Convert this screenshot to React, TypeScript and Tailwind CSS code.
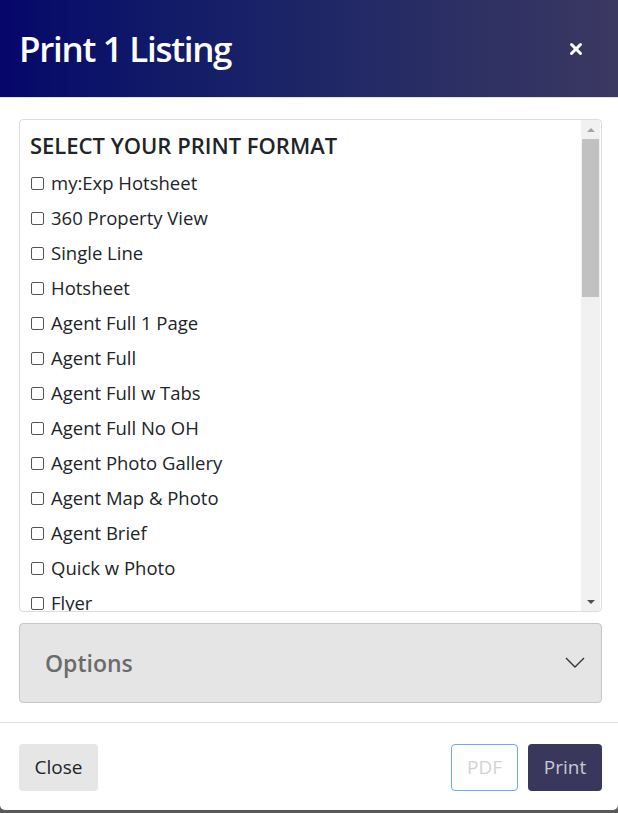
import { X } from 'lucide-react';

const formats = [
  'my:Exp Hotsheet',
  '360 Property View',
  'Single Line',
  'Hotsheet',
  'Agent Full 1 Page',
  'Agent Full',
  'Agent Full w Tabs',
  'Agent Full No OH',
  'Agent Photo Gallery',
  'Agent Map & Photo',
  'Agent Brief',
  'Quick w Photo',
  'Flyer',
];

function Checkbox() {
  return <span className="inline-block w-[13px] h-[13px] shrink-0 rounded-[2px] border border-[#555] bg-white" />;
}

export default function App() {
  return (
    <div className="h-[813px] w-[618px] bg-[#5a5a5a]" style={{ fontFamily: '"Open Sans", "Noto Sans", sans-serif' }}>
      <div className="flex h-[810px] flex-col rounded-b-[5px] bg-white">
        {/* header */}
        <div className="flex h-[98px] items-center justify-between border-b border-[#dee2e6] bg-gradient-to-r from-[#06056a] to-[#3b3861] pl-[19px] pr-[33px]">
          <h1 className="text-[35px] font-semibold leading-none tracking-[-1.3px] text-white">Print 1 Listing</h1>
          <X className="h-[18px] w-[18px] text-white" strokeWidth={4} />
        </div>

        {/* body */}
        <div className="flex flex-col gap-[11px] pl-[19px] pr-[16px] pt-[21px]">
          <div className="flex h-[493px] overflow-hidden rounded-[4px] border border-[#dcdcdc]">
            <div className="flex-1 overflow-hidden pl-[10px] pt-[10px]">
              <div className="mb-[6px] text-[22px] font-semibold leading-[30px] text-[#212529]">SELECT YOUR PRINT FORMAT</div>
              {formats.map((f) => (
                <div key={f} className="flex h-[35px] items-center gap-[7px] pl-[1px] text-[18.5px] text-[#212529]">
                  <Checkbox />
                  <span className="leading-none">{f}</span>
                </div>
              ))}
            </div>
            <div className="mr-[1px] flex w-[19px] flex-col items-center bg-[#f1f1f1]">
              <div className="flex h-[19px] items-center justify-center">
                <span className="h-0 w-0 border-x-[4px] border-b-[4px] border-x-transparent border-b-[#a3a3a3]" />
              </div>
              <div className="h-[158px] w-[17px] bg-[#c1c1c1]" />
              <div className="flex-1" />
              <div className="flex h-[19px] items-center justify-center">
                <span className="h-0 w-0 border-x-[4px] border-t-[4px] border-x-transparent border-t-[#505050]" />
              </div>
            </div>
          </div>

          <div className="flex h-[80px] items-center justify-between rounded-[4px] border border-[#c6c6c6] bg-[#e5e5e5] pl-[25px] pr-[16px]">
            <span className="text-[23px] font-semibold leading-[32px] text-[#6b6b6b]">Options</span>
            <svg width="20" height="12" viewBox="0 0 20 12" fill="none" stroke="#333" strokeWidth="1.4">
              <path d="M1 1l9 9 9-9" />
            </svg>
          </div>
        </div>

        {/* footer */}
        <div className="mt-[19px] flex flex-1 items-start justify-between border-t border-[#dee2e6] pl-[19px] pr-[16px] pt-[21px]">
          <button className="h-[47px] w-[79px] rounded-[4px] bg-[#e6e6e6] text-[19px] text-[#212529]">Close</button>
          <div className="flex gap-[10px]">
            <button className="h-[47px] w-[67px] rounded-[4px] border border-[#6fa8f5] bg-white text-[19px] text-[#d3d3d3]">PDF</button>
            <button className="h-[47px] w-[74px] rounded-[4px] bg-[#3a375c] text-[19px] text-[#c9c9d3]">Print</button>
          </div>
        </div>
      </div>
    </div>
  );
}
